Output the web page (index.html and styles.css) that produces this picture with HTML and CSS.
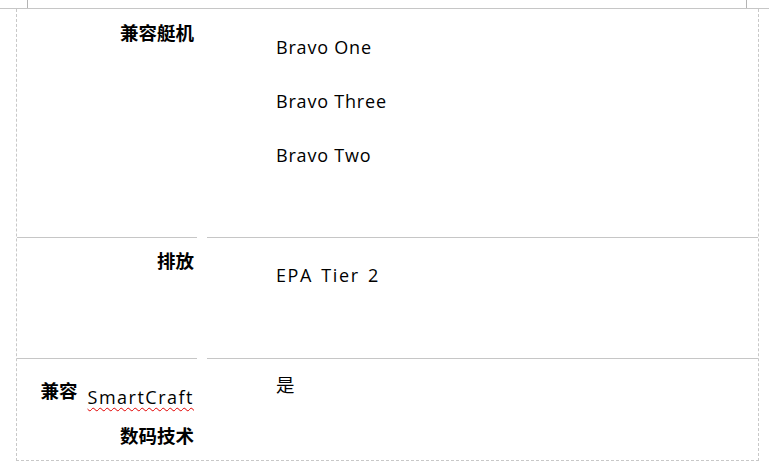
FILE: index.html
```html
<!DOCTYPE html>
<html lang="zh">
<head>
<meta charset="utf-8">
<title>兼容艇机</title>
<link rel="stylesheet" href="styles.css">
</head>
<body>
<div class="ruler"><div class="marks"></div></div>
<div class="table">
  <div class="row row1">
    <div class="cell label"><div class="cjk b">兼容艇机</div></div>
    <div class="cell value">
      <div class="hand">Bravo One</div>
      <div class="hand gap">Bravo Three</div>
      <div class="hand gap">Bravo Two</div>
    </div>
  </div>
  <div class="row row2">
    <div class="cell label"><div class="cjk b">排放</div></div>
    <div class="cell value"><div class="hand epa">EPA Tier 2</div></div>
  </div>
  <div class="row row3">
    <div class="cell label l3">
      <div class="cjk b l1">兼容<span class="hand sc">SmartCraft</span></div>
      <div class="cjk b l2">数码技术</div>
    </div>
    <div class="cell value v3"><div class="cjk">是</div></div>
  </div>
</div>
</body>
</html>
```
FILE: styles.css
```css
html, body {
  margin: 0;
  padding: 0;
  background: #ffffff;
}
body {
  width: 769px;
  height: 471px;
  overflow: hidden;
  color: #000;
}
.ruler {
  height: 8px;
  border-bottom: 1px solid #c6c6c6;
}
.marks {
  margin-left: 27px;
  width: 720px;
  height: 8px;
  box-sizing: border-box;
  border-left: 1px solid #b4b4b4;
  border-right: 1px solid #b4b4b4;
}
.table {
  margin-left: 16px;
  width: 743px;
  box-sizing: border-box;
  border-left: 1px dashed #c8c8c8;
  border-right: 1px dashed #c8c8c8;
  border-bottom: 1px dashed #c8c8c8;
}
.row {
  display: grid;
  grid-template-columns: 180px 551px;
  column-gap: 10px;
}
.cell {
  box-sizing: border-box;
  border-bottom: 1px solid #c6c6c6;
}
.row1 .cell { height: 229px; }
.row2 .cell { height: 121px; }
.row3 .cell { height: 101px; border-bottom: none; }
.label {
  text-align: right;
  padding-right: 3px;
}
.row1 .label { padding-top: 13px; }
.row2 .label { padding-top: 12px; }
.value {
  padding-left: 69px;
}
.row1 .value { padding-top: 29px; }
.row2 .value { padding-top: 28px; }
.cjk {
  font-family: "Noto Sans CJK SC", sans-serif;
  font-size: 18.5px;
  line-height: 20px;
}
.b { font-weight: 700; }
.hand {
  font-family: "Open Sans", sans-serif;
  font-size: 18px;
  line-height: 18px;
  letter-spacing: 0.8px;
  font-weight: 500;
}
.epa { letter-spacing: 1.6px; word-spacing: 2px; }
.gap { margin-top: 36px; }
.l3 { padding-top: 21px; }
.l1 { height: 20px; }
.sc {
  margin-left: 10px;
  vertical-align: -6px;
  letter-spacing: 1.5px;
  text-decoration: underline wavy #e00000;
  text-decoration-thickness: 1px;
  text-underline-offset: 3px;
}
.l2 { margin-top: 25px; }
.v3 { padding-top: 15px; }
```
